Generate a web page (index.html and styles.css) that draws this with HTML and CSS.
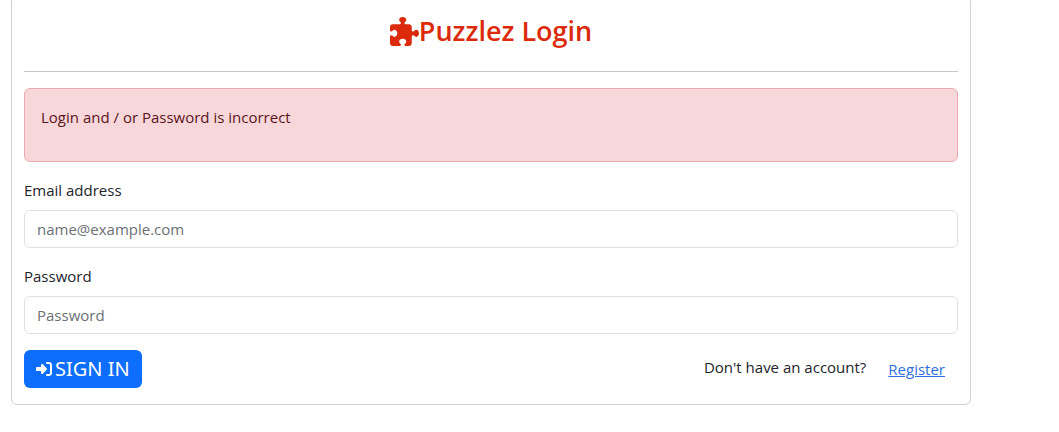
FILE: index.html
```html
<!DOCTYPE html>
<html lang="en">
<head>
<meta charset="utf-8">
<meta name="viewport" content="width=device-width, initial-scale=1">
<title>Puzzlez Login</title>
<link rel="stylesheet" href="styles.css">
</head>
<body>
<main class="card">
  <h1 class="title">
    <svg class="title-icon" viewBox="0 0 512 512" aria-hidden="true"><path fill="currentColor" d="M192 104.8c0-9.2-5.8-17.3-13.2-22.8C167.2 73.3 160 61.3 160 48c0-26.5 28.7-48 64-48s64 21.5 64 48c0 13.3-7.2 25.3-18.8 34c-7.4 5.5-13.2 13.6-13.2 22.8c0 12.8 10.4 23.2 23.2 23.2H336c26.5 0 48 21.5 48 48v56.8c0 12.8 10.4 23.2 23.2 23.2c9.2 0 17.3-5.8 22.8-13.2c8.7-11.6 20.7-18.8 34-18.8c26.5 0 48 28.7 48 64s-21.5 64-48 64c-13.3 0-25.3-7.2-34-18.8c-5.5-7.4-13.6-13.2-22.8-13.2c-12.8 0-23.2 10.4-23.2 23.2V464c0 26.5-21.5 48-48 48H279.2c-12.8 0-23.2-10.4-23.2-23.2c0-9.2 5.8-17.3 13.2-22.8c11.6-8.7 18.8-20.7 18.8-34c0-26.5-28.7-48-64-48s-64 21.5-64 48c0 13.3 7.2 25.3 18.8 34c7.4 5.5 13.2 13.6 13.2 22.8c0 12.8-10.4 23.2-23.2 23.2H48c-26.5 0-48-21.5-48-48V343.2C0 330.4 10.4 320 23.2 320c9.2 0 17.3 5.8 22.8 13.2C54.7 344.8 66.7 352 80 352c26.5 0 48-28.7 48-64s-21.5-64-48-64c-13.3 0-25.3 7.2-34 18.8C40.5 250.2 32.4 256 23.2 256C10.4 256 0 245.6 0 232.8V176c0-26.5 21.5-48 48-48H168.8c12.8 0 23.2-10.4 23.2-23.2z"/></svg><span>Puzzlez Login</span>
  </h1>
  <hr class="rule">
  <div class="alert" role="alert">
    <p class="alert-text">Login and / or Password is incorrect</p>
  </div>
  <form class="form">
    <div class="field">
      <label class="label" for="email">Email address</label>
      <input class="input" type="email" id="email" placeholder="name@example.com">
    </div>
    <div class="field">
      <label class="label" for="password">Password</label>
      <input class="input" type="password" id="password" placeholder="Password">
    </div>
    <div class="actions">
      <button class="sign-in" type="submit">
        <svg class="sign-in-icon" viewBox="0 0 512 512" aria-hidden="true"><path fill="currentColor" d="M217.9 105.9L340.7 228.7c7.2 7.2 11.3 17.1 11.3 27.3s-4.1 20.1-11.3 27.3L217.9 406.1c-6.4 6.4-15 9.9-24 9.9c-18.7 0-33.9-15.2-33.9-33.9l0-62.1L32 320c-17.7 0-32-14.3-32-32l0-64c0-17.7 14.3-32 32-32l128 0 0-62.1c0-18.7 15.2-33.9 33.9-33.9c9 0 17.6 3.6 24 9.9zM352 416l64 0c17.7 0 32-14.3 32-32l0-256c0-17.7-14.3-32-32-32l-64 0c-17.7 0-32-14.3-32-32s14.3-32 32-32l64 0c53 0 96 43 96 96l0 256c0 53-43 96-96 96l-64 0c-17.7 0-32-14.3-32-32s14.3-32 32-32z"/></svg>
        <span>SIGN IN</span>
      </button>
      <div class="signup">
        <span>Don't have an account?</span>
        <a class="register" href="#">Register</a>
      </div>
    </div>
  </form>
</main>
</body>
</html>
```
FILE: styles.css
```css
*,
*::before,
*::after {
  box-sizing: border-box;
}

body {
  margin: 0;
  padding: 0 88px 24px 11px;
  background: #fff;
  color: #212529;
  font-family: "Segoe UI", "Open Sans", "Noto Sans", sans-serif;
  font-size: 15px;
  line-height: 24px;
}

.card {
  max-width: 960px;
  margin-top: -4px;
  padding: 16px 12px;
  border: 1px solid #ced0d2;
  border-radius: 6px;
}

.title {
  display: flex;
  justify-content: center;
  align-items: center;
  margin: 0;
  color: #dc2a0c;
  font-size: 27px;
  font-weight: 600;
  line-height: 36px;
}

.title-icon {
  width: 29px;
  height: 29px;
}

.rule {
  margin: 22px 0 16px;
  border: 0;
  border-top: 1px solid #c7c8c9;
}

.alert {
  margin-bottom: 16px;
  padding: 16px;
  border: 1px solid #eba9b0;
  border-radius: 6px;
  background: #f8d7da;
  color: #58151c;
}

.alert-text {
  margin: 0 0 16px;
}

.form,
.field {
  display: flex;
  flex-direction: column;
}

.form {
  gap: 16px;
}

.field {
  gap: 8px;
}

.input {
  width: 100%;
  height: 38px;
  padding: 6px 12px;
  border: 1px solid #dee2e6;
  border-radius: 6px;
  background: #fff;
  color: #212529;
  font: inherit;
}

.input::placeholder {
  color: #6c7075;
  opacity: 1;
}

.actions {
  display: flex;
  justify-content: space-between;
  align-items: flex-start;
}

.sign-in {
  display: flex;
  align-items: center;
  gap: 3px;
  height: 38px;
  padding: 0 12px;
  border: 0;
  border-radius: 6px;
  background: #0d6efd;
  color: #fff;
  font-family: "Noto Sans", sans-serif;
  font-size: 20px;
  line-height: 24px;
}

.sign-in-icon {
  width: 16px;
  height: 16px;
}

.signup {
  display: flex;
  align-items: flex-start;
  gap: 9px;
  padding-top: 5px;
}

.register {
  padding: 2px 13px 0;
  color: #2f6fe0;
  text-decoration: underline;
}
```
